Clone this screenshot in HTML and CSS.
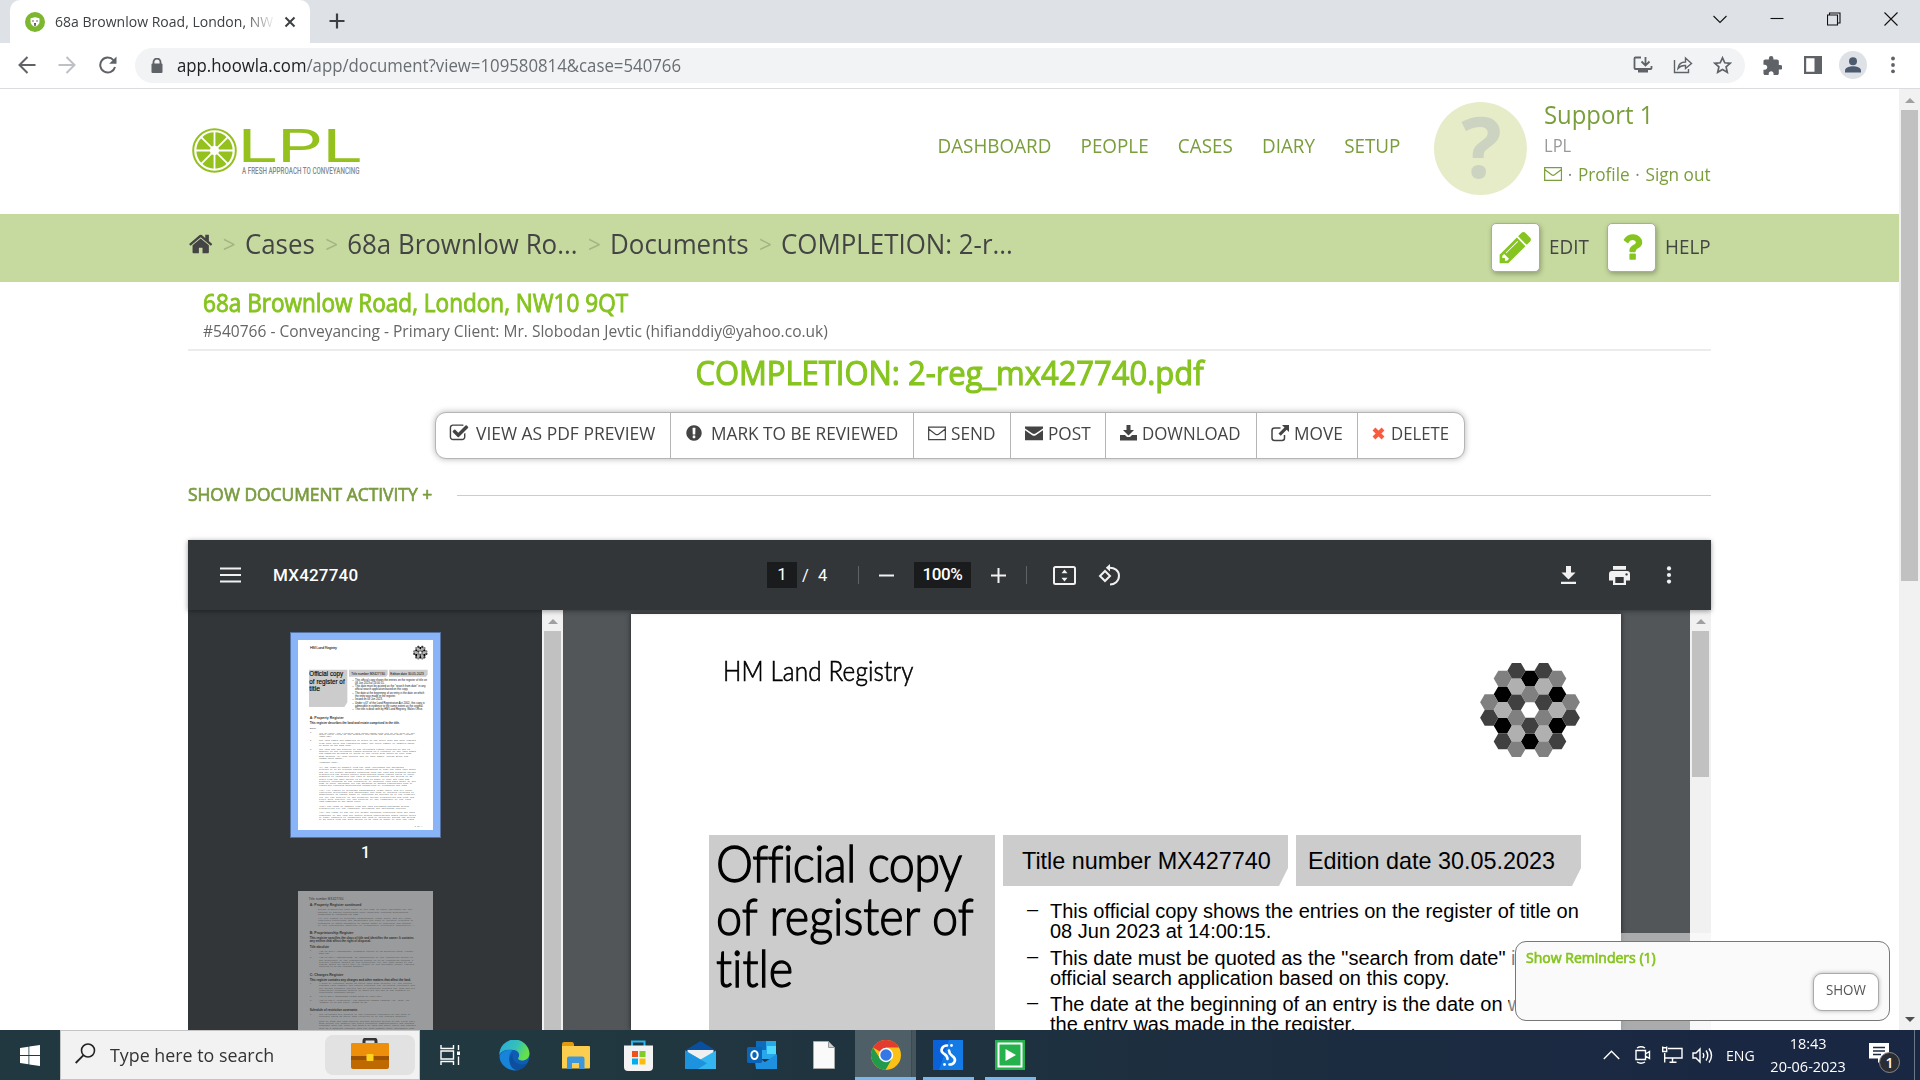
FILE: index.html
```html
<!DOCTYPE html>
<html lang="en">
<head>
<meta charset="utf-8">
<title>68a Brownlow Road, London, NW10 9QT</title>
<link rel="stylesheet" href="styles.css">
</head>
<body>
<div class="tabstrip">
  <div class="tab">
    <svg class="favicon" width="20" height="20" viewBox="0 0 20 20"><circle cx="10" cy="10" r="10" fill="#7db72f"/><path d="M5.500 8q-.5-2.500 1.500-2 3-1.500 6 0 2-.5 1.500 2 .6 3-1.500 5-3 3-6 0-2-2-1.500-5z" fill="#fff"/><circle cx="8" cy="9" r=".8" fill="#555"/><circle cx="12" cy="9" r=".8" fill="#555"/><path d="M9 11h2l-.3 3h-1.400z" fill="#555"/></svg>
    <div class="tab-label"><span class="tab-title">68a Brownlow Road, London, NW</span></div>
    <svg class="tab-close" width="12" height="12" viewBox="0 0 12 12"><path d="M1.500 1.500l9 9M10.500 1.500l-9 9" stroke="#3c4043" stroke-width="2"/></svg>
  </div>
  <svg class="tab-new" width="16" height="16" viewBox="0 0 16 16"><path d="M8 .5v15M.5 8h15" stroke="#3c4043" stroke-width="2.200"/></svg>
  <div class="window-controls">
    <svg width="14" height="14" viewBox="0 0 14 14"><path d="M.5 4l6.500 6.500L13.500 4"/></svg>
    <svg width="14" height="14" viewBox="0 0 14 14"><path d="M.5 6.500h13"/></svg>
    <svg width="14" height="14" viewBox="0 0 14 14"><path d="M.5 3h10v10h-10zM2.500 3V1h10.500v10H10.500"/></svg>
    <svg width="14" height="14" viewBox="0 0 14 14"><path d="M.5.5l13 13M13.500.5l-13 13"/></svg>
  </div>
</div>
<div class="toolbar">
  <div class="nav-icons">
    <svg width="18" height="18" viewBox="0 0 18 18"><path d="M17.500 9H2M9.500 1L1.500 9l8 8" stroke="#5f6368"/></svg>
    <svg width="18" height="18" viewBox="0 0 18 18"><path d="M.5 9H16M8.500 1l8 8-8 8" stroke="#bdc1c6"/></svg>
    <svg width="20" height="18" viewBox="0 0 20 18"><path d="M15.500 4.200A7.500 7.500 0 1 0 17 11" stroke="#5f6368"/><path d="M18.500.5v7.300h-7.300z" fill="#5f6368"/></svg>
  </div>
  <div class="omnibox">
    <svg class="lock" width="12" height="15" viewBox="0 0 12 15"><path d="M2.500 6V4a3.500 3.500 0 0 1 7 0v2" fill="none" stroke="#5f6368" stroke-width="1.800"/><rect x=".5" y="5.500" width="11" height="9.500" rx="1" fill="#5f6368"/></svg>
    <span class="url"><b>app.hoowla.com</b>/app/document?view=109580814&amp;case=540766</span>
    <div class="omni-actions">
      <svg width="20" height="18" viewBox="0 0 20 18"><path d="M8 1.500H2.500q-1 0-1 1V12q0 1 1 1h15q1 0 1-1v-2M12.500 1v8M8.500 5.500l4 4 4-4" fill="none" stroke="#5f6368" stroke-width="1.800"/><path d="M5 13h10v3.500H5z" fill="#5f6368"/></svg>
      <svg width="20" height="18" viewBox="0 0 20 18"><path d="M1.500 4v12.500h14V13M5 12.500c.5-4 3-6.500 7.500-6.500V2l6 5.500-6 5V9.500C9 9.300 7 10 5 12.500z" fill="none" stroke="#5f6368" stroke-width="1.400"/></svg>
      <svg width="19" height="18" viewBox="0 0 19 18"><path d="M9.500 1.800l2.300 5 5.400.5-4.100 3.600 1.200 5.300-4.800-2.800-4.800 2.800 1.200-5.300L1.800 7.300l5.400-.5z" fill="none" stroke="#5f6368" stroke-width="1.700"/></svg>
    </div>
  </div>
  <div class="ext-icons">
    <svg width="19" height="19" viewBox="2 1 20 21"><path fill="#5f6368" d="M20.500 11H19V7c0-1.100-.9-2-2-2h-4V3.500a2.500 2.500 0 0 0-5 0V5H4c-1.100 0-2 .9-2 2v3.800h1.500c1.500 0 2.700 1.200 2.700 2.700S5 16.200 3.500 16.200H2V20c0 1.100.9 2 2 2h3.800v-1.500c0-1.500 1.200-2.700 2.700-2.700s2.700 1.200 2.700 2.700V22H17c1.100 0 2-.9 2-2v-4h1.500a2.500 2.500 0 0 0 0-5z"/></svg>
    <svg width="18" height="18" viewBox="0 0 18 18"><path fill="#5f6368" fill-rule="evenodd" d="M0 0h18v18H0zM2.200 2.200v13.600h8.300V2.200z"/></svg>
    <svg width="28" height="28" viewBox="0 0 28 28"><circle cx="14" cy="14" r="14" fill="#dee1e6"/><circle cx="14" cy="10.200" r="4" fill="#4d5b70"/><path d="M6 21.500v-2c0-3 5-4.300 8-4.300s8 1.300 8 4.300v2z" fill="#4d5b70"/></svg>
    <svg width="6" height="18" viewBox="0 0 6 18"><circle cx="3" cy="2.500" r="1.900" fill="#5f6368"/><circle cx="3" cy="9" r="1.900" fill="#5f6368"/><circle cx="3" cy="15.300" r="1.900" fill="#5f6368"/></svg>
  </div>
</div>

<div class="viewport">
  <div class="page">
    <header class="site-header">
      <svg class="logo" width="172" height="50" viewBox="190 127 172 50">
        <circle cx="214.500" cy="150.500" r="21.300" fill="none" stroke="#95c11f" stroke-width="2"/>
        <circle cx="214.500" cy="150.500" r="11.400" fill="none" stroke="#95c11f" stroke-width="13.500"/>
        <path d="M214.500 131v39M195 150.500h39M200.700 136.700l27.600 27.600M228.300 136.700l-27.600 27.600" stroke="#fff" stroke-width="1.800"/>
        <g class="logo-word" transform="translate(0 161.800) scale(1.600 1)"><text x="148.300 173 201.300">LPL</text></g>
        <text class="logo-tag" x="242" y="174" textLength="117.500" lengthAdjust="spacingAndGlyphs">A FRESH APPROACH TO CONVEYANCING</text>
      </svg>
      <nav class="main-nav"><a>DASHBOARD</a><a>PEOPLE</a><a>CASES</a><a>DIARY</a><a>SETUP</a></nav>
      <div class="avatar">?</div>
      <div class="account">
        <div class="account-name">Support 1</div>
        <div class="account-org">LPL</div>
        <div class="account-links">
          <svg width="19" height="14" viewBox="0 0 19 14"><path d="M.7.700h17.600v12.600H.7zM.7 2.500l7.300 5.300q1.500 1 3 0l7.300-5.300" fill="none" stroke="#7a9e3b" stroke-width="1.300"/></svg>
          <i>·</i><a>Profile</a><i>·</i><a>Sign out</a>
        </div>
      </div>
    </header>

    <div class="crumb-bar">
      <div class="crumbs">
        <svg width="27" height="26" viewBox="0 0 1792 1792" preserveAspectRatio="none"><path fill="#444" d="M1472 992v480q0 26-19 45t-45 19h-384v-384h-256v384h-384q-26 0-45-19t-19-45v-480q0-1 .5-3t.5-3l575-474 575 474q1 2 1 6zm223-69l-62 74q-8 9-21 11h-3q-13 0-21-7l-692-577-692 577q-12 8-24 7-13-2-21-11l-62-74q-8-10-7-23.500t11-21.500l719-599q32-26 76-26t76 26l244 204v-195q0-14 9-23t23-9h192q14 0 23 9t9 23v408l219 182q10 8 11 21.500t-7 23.500z"/></svg>
        <i>&gt;</i><a>Cases</a><i>&gt;</i><a>68a Brownlow Ro...</a><i>&gt;</i><a>Documents</a><i>&gt;</i><a>COMPLETION: 2-r...</a>
      </div>
      <div class="crumb-actions">
        <span class="square-btn"><svg width="37" height="37" viewBox="0 0 1792 1792"><path fill="#86c41f" d="M491 1536l91-91-235-235-91 91v107h128v128h107zm523-928q0-22-22-22-10 0-17 7l-542 542q-7 7-7 17 0 22 22 22 10 0 17-7l542-542q7-7 7-17zm-54-192l416 416-832 832h-416v-416zm683 96q0 53-37 90l-166 166-416-416 166-165q36-38 90-38 53 0 91 38l235 234q37 39 37 91z"/></svg></span>
        <span class="action-label edit-label">EDIT</span>
        <span class="square-btn"><svg width="36" height="36" viewBox="0 0 1792 1792"><path fill="#86c41f" d="M1088 1256v240q0 16-12 28t-28 12h-240q-16 0-28-12t-12-28v-240q0-16 12-28t28-12h240q16 0 28 12t12 28zm316-600q0 54-15.500 101t-35 76.500-55 59.500-57.500 43.500-61 35.500q-41 23-68.500 65t-27.500 67q0 17-12 32.500t-28 15.500h-240q-15 0-25.500-18.500t-10.500-37.500v-45q0-83 65-156.500t143-108.500q59-27 84-56t25-76q0-42-46.500-74t-107.500-32q-65 0-108 29-35 25-107 115-13 16-31 16-12 0-25-8l-164-125q-13-10-15.500-25t5.500-28q160-266 464-266 80 0 161 31t146 83 106 127.500 41 158.500z"/></svg></span>
        <span class="action-label help-label">HELP</span>
      </div>
    </div>

    <section class="case-info">
      <h2>68a Brownlow Road, London, NW10 9QT</h2>
      <p>#540766 - Conveyancing - Primary Client: Mr. Slobodan Jevtic (hifianddiy@yahoo.co.uk)</p>
    </section>
    <h1>COMPLETION: 2-reg_mx427740.pdf</h1>

    <div class="doc-actions">
      <a class="act-preview"><svg width="20" height="20" viewBox="0 0 1792 1792"><path fill="#444" d="M1472 930v318q0 119-84.500 203.500t-203.500 84.500h-832q-119 0-203.500-84.500t-84.500-203.500v-832q0-119 84.500-203.500t203.500-84.500h832q63 0 117 25 15 7 18 23 3 17-9 29l-49 49q-10 10-23 10-3 0-9-2-23-6-45-6h-832q-66 0-113 47t-47 113v832q0 66 47 113t113 47h832q66 0 113-47t47-113v-254q0-13 9-22l64-64q10-10 23-10 6 0 12 3 20 8 20 29zm231-489l-814 814q-24 24-57 24t-57-24l-430-430q-24-24-24-57t24-57l110-110q24-24 57-24t57 24l263 263 647-647q24-24 57-24t57 24l110 110q24 24 24 57t-24 57z"/></svg><span>VIEW AS PDF PREVIEW</span></a>
      <a class="act-review"><svg width="18" height="18" viewBox="0 0 1792 1792"><path fill="#444" d="M896 128q209 0 385.500 103t279.500 279.500 103 385.500-103 385.500-279.500 279.500-385.500 103-385.500-103-279.500-279.500-103-385.500 103-385.500 279.500-279.500 385.500-103zm128 1247v-190q0-14-9-23.500t-22-9.500h-192q-13 0-23 10t-10 23v190q0 13 10 23t23 10h192q13 0 22-9.500t9-23.500zm-2-344l18-621q0-12-10-18-10-8-24-8h-220q-14 0-24 8-10 6-10 18l17 621q0 10 10 17.500t24 7.500h185q14 0 23.500-7.500t10.500-17.500z"/></svg><span>MARK TO BE REVIEWED</span></a>
      <a class="act-send"><svg width="18" height="15" viewBox="0 0 19 15"><path d="M.7.700h17.600v13.300H.7zM.7 2.800l7.200 5.400q1.600 1.100 3.200 0l7.200-5.400" fill="none" stroke="#444" stroke-width="1.300"/></svg><span>SEND</span></a>
      <a class="act-post"><svg width="18" height="15" viewBox="0 0 19 15"><path d="M0 0h19v2.200l-7.900 5.400q-1.600 1-3.200 0L0 2.200zM0 4.200l8 5.300q1.500 1 3 0l8-5.300V14.500H0z" fill="#444"/></svg><span>POST</span></a>
      <a class="act-download"><svg width="17" height="16" viewBox="0 0 17 16"><path d="M6.500 0h4v5h3.500L8.500 10.500 3 5h3.500zM0 10h5l2 2h3l2-2h5v5.500H0z" fill="#444"/></svg><span>DOWNLOAD</span></a>
      <a class="act-move"><svg width="18" height="17" viewBox="0 0 18 17"><path d="M9.500 3H3.500q-2.500 0-2.500 2.500v7.500q0 2.500 2.500 2.500h7.500q2.500 0 2.500-2.500v-3" fill="none" stroke="#444" stroke-width="1.500"/><path d="M11 0h7v7l-2.300-2.300-6 6L7.500 8.500l6-6z" fill="#444"/></svg><span>MOVE</span></a>
      <a class="act-delete"><svg width="13" height="13" viewBox="0 0 13 13"><path d="M2 2l9 9M11 2l-9 9" stroke="#fb5a3c" stroke-width="4"/></svg><span>DELETE</span></a>
    </div>

    <div class="activity"><a>SHOW DOCUMENT ACTIVITY +</a><hr></div>

    <div class="viewer">
      <div class="viewer-bar">
        <svg width="21" height="16" viewBox="0 0 21 16"><path d="M0 1.500h21M0 8h21M0 14.500h21" stroke="#f1f1f1" stroke-width="2.200"/></svg>
        <b class="viewer-title">MX427740</b>
        <div class="viewer-tools">
          <span class="page-no">1</span><span class="page-total">/&nbsp; 4</span>
          <i></i>
          <svg width="15" height="15" viewBox="0 0 15 15"><path d="M0 7.500h15" stroke="#f1f1f1" stroke-width="2"/></svg>
          <span class="zoom-level">100%</span>
          <svg width="15" height="15" viewBox="0 0 15 15"><path d="M0 7.500h15M7.500 0v15" stroke="#f1f1f1" stroke-width="2"/></svg>
          <i></i>
          <svg class="fit" width="23" height="19" viewBox="0 0 23 19"><rect x="1" y="1" width="21" height="17" rx="1.500" fill="none" stroke="#f1f1f1" stroke-width="2"/><path d="M11.500 3.500l3 3.700h-6zM11.500 15.500l3-3.700h-6z" fill="#f1f1f1"/></svg>
          <svg class="rotate" width="23" height="22" viewBox="0 0 23 22"><path d="M7 7l5 5-5 5-5-5zM10.500 3.800c6-.5 10.500 2.700 10.500 8s-4.500 8.700-9 8.700" fill="none" stroke="#f1f1f1" stroke-width="2"/><path d="M12 0v7.600L7.800 3.800z" fill="#f1f1f1"/></svg>
        </div>
        <div class="viewer-end">
          <svg width="15" height="18" viewBox="0 0 15 18"><path d="M5 0h5v6.500h4.500l-7 7-7-7H5zM0 15.700h15V18H0z" fill="#f1f1f1"/></svg>
          <svg width="21" height="19" viewBox="0 0 21 19"><path fill-rule="evenodd" d="M4 0h13v3.800H4zM3 5h15q3 0 3 3v6.500h-4V19H4v-4.500H0V8q0-3 3-3zm3.300 6v6h8.400v-6zM17.500 7.200a1.200 1.200 0 1 0 .1 0z" fill="#f1f1f1"/></svg>
          <svg class="more" width="6" height="18" viewBox="0 0 6 18"><circle cx="3" cy="2.400" r="2.100" fill="#f1f1f1"/><circle cx="3" cy="9" r="2.100" fill="#f1f1f1"/><circle cx="3" cy="15.600" r="2.100" fill="#f1f1f1"/></svg>
        </div>
      </div>
      <div class="viewer-body">
        <aside class="thumbs">
          <div class="thumb thumb-current">
            <svg width="135" height="190" viewBox="0 0 405 570">
              <rect width="405" height="570" fill="#fff"/>
              <text x="36" y="27" font-size="11.500" textLength="81">HM Land Registry</text>
              <use href="#hmlr" x="0" y="0" transform="translate(367 38) scale(.44)"/>
              <path d="M33 89h115v98l-9 14H33zM153 89h116v15l-5 6H153zM273 89h116v15l-5 6H273z" fill="#ccc"/>
              <g font-size="22" stroke="#000" stroke-width=".4"><text x="34" y="109" textLength="101" lengthAdjust="spacingAndGlyphs">Official copy</text><text x="34" y="131" textLength="106" lengthAdjust="spacingAndGlyphs">of register of</text><text x="34" y="153" textLength="32" lengthAdjust="spacingAndGlyphs">title</text></g>
              <g font-size="9.500"><text x="160" y="104">Title number MX427740</text><text x="277" y="104">Edition date 30.05.2023</text></g>
              <g font-size="8" fill="#111"><text x="163" y="123">–</text><text x="171" y="123" textLength="216">This official copy shows the entries on the register of title on</text><text x="171" y="131">08 Jun 2023 at 14:00:15.</text><text x="163" y="142">–</text><text x="171" y="142" textLength="212">This date must be quoted as the "search from date" in any</text><text x="171" y="151">official search application based on this copy.</text><text x="163" y="161">–</text><text x="171" y="161" textLength="208">The date at the beginning of an entry is the date on which</text><text x="171" y="170">the entry was made in the register.</text><text x="163" y="179">–</text><text x="171" y="179">Issued on 08 Jun 2023.</text><text x="163" y="191">–</text><text x="171" y="191" textLength="209">Under s.67 of the Land Registration Act 2002, this copy is</text><text x="171" y="200" textLength="205">admissible in evidence to the same extent as the original.</text><text x="163" y="209">–</text><text x="171" y="209" textLength="204">This title is dealt with by HM Land Registry, Wales Office.</text></g>
              <text x="35" y="238" font-size="10.500" font-weight="700" fill="#333">A: Property Register</text>
              <text x="35" y="253" font-size="9" font-weight="700" fill="#333" textLength="270">This register describes the land and estate comprised in the title.</text>
              <g class="mono"><text x="35" y="268">BRENT</text><text x="36" y="280">1</text><text x="63" y="281" textLength="287">(19.09.1961) The Freehold land shown edged with red on the plan of the</text><text x="63" y="286" textLength="281">above title filed at the Registry and being 68a Brownlow Road, London</text><text x="63" y="292">(NW10 9QT).</text><text x="36" y="304">2</text><text x="63" y="304" textLength="290">The land edged and numbered in green on the title plan has been removed</text><text x="63" y="312" textLength="286">from this title and registered under the title number or numbers shown</text><text x="63" y="319">in green on the said plan.</text><text x="36" y="331">3</text><text x="63" y="331" textLength="273">The land has the benefit of the following rights reserved by but is</text><text x="63" y="337" textLength="290">subject to the following rights granted by a Transfer of the land edged</text><text x="63" y="343" textLength="277">and numbered MX435678 in green on the filed plan dated 12 July 1983</text><text x="63" y="352" textLength="267">made between (1) John Patrick and (2) Mary Smith, George Brent and</text><text x="63" y="358">Thomas Henry Smith:-</text><text x="63" y="370">"Together with:-</text><text x="63" y="385" textLength="254">(i) The right of support from the land (including the buildings</text><text x="63" y="391" textLength="290">erected or to be erected thereon) adjoining or near the said land shown</text><text x="63" y="400" textLength="290">and for all proper purposes connected with the land and property hereby</text><text x="63" y="406" textLength="286">transferred the drains sewers watercourses pipes cables wires or other</text><text x="63" y="412" textLength="280">channels or conductors now laid or hereafter during the period of 80</text><text x="63" y="419" textLength="270">years from the date hereof to be laid in under or over the land and</text><text x="63" y="427" textLength="290">property retained by the Transferor or adjacent land with power at any</text><text x="63" y="433" textLength="280">time to enter thereupon for the purposes of making connections with or</text><text x="63" y="439" textLength="264">repairing renewing maintaining inspecting or cleansing the same</text><text x="63" y="454" textLength="280">(ii) All rights of drainage passageways light water and all other</text><text x="63" y="460" textLength="285">liberties privileges and advantages now used or enjoyed relating or</text><text x="63" y="466" textLength="287">appurtenant in equity quasi or otherwise by Section 62 of the Property</text><text x="63" y="473" textLength="285">Act for the benefit of the property hereby transferred and each and</text><text x="63" y="479" textLength="275">every part thereof for the benefit of the remainder of the land</text><text x="63" y="486">land comprised in the above title</text><text x="63" y="501" textLength="270">(iii) The right of support from the land including buildings hereby</text><text x="63" y="507" textLength="260">transferred for the remainder including the buildings thereon</text><text x="63" y="519" textLength="287">(iv) The right to use for all proper purposes connected with the said</text><text x="63" y="528" textLength="290">remainder of the land the sewers drains watercourses pipes cables wires</text><text x="63" y="534" textLength="288">or other channels or conductors now laid or hereafter during the period</text><text x="63" y="540" textLength="284">of 80 years from the date hereof to be laid in under or over the land</text><text x="350" y="561">1 of 4</text></g>
            </svg>
          </div>
          <span class="thumb-no">1</span>
          <div class="thumb">
            <svg width="135" height="190" viewBox="0 0 405 570">
              <rect width="405" height="570" fill="#9a9b9d"/>
              <g fill="#333">
                <text x="32" y="27" font-size="9" textLength="104">Title number MX427740</text>
                <g font-size="10.500" font-weight="700"><text x="35" y="45">A: Property Register continued</text><text x="35" y="129">B: Proprietorship Register</text><text x="35" y="254">C: Charges Register</text></g>
                <g font-size="9" font-weight="700"><text x="35" y="144" textLength="312" lengthAdjust="spacingAndGlyphs">This register specifies the class of title and identifies the owner. It contains</text><text x="35" y="152">any entries that affect the right of disposal.</text><text x="35" y="170">Title absolute</text><text x="35" y="269" textLength="304">This register contains any charges and other matters that affect the land.</text><text x="35" y="361">Schedule of restrictive covenants</text></g>
              </g>
              <g class="mono mono-dim"><text x="60" y="57" textLength="282">hereby transferred with power at any time to enter thereupon for the</text><text x="60" y="66" textLength="270">purpose of making connections with repairing renewing maintaining</text><text x="60" y="73">inspecting or cleansing the same</text><text x="60" y="84" textLength="280">(v) All rights of drainage passageways light water and all other</text><text x="60" y="91" textLength="286">liberties privileges and advantages now used or enjoyed relating or</text><text x="60" y="98" textLength="280">easements or quasi-easements in equity quasi or otherwise and whether</text><text x="60" y="104" textLength="288">or not continuous apparent or reasonably necessary whatsoever."</text><text x="36" y="181">1</text><text x="63" y="182" textLength="282">(08.10.2004) PROPRIETOR: SLOBODAN JEVTIC of 68 Brownlow Road, London</text><text x="63" y="188">NW10 9QT.</text><text x="36" y="200">2</text><text x="63" y="200" textLength="282">(08.10.2004) RESTRICTION: No disposition of the registered estate by</text><text x="63" y="209" textLength="282">the proprietor of the registered estate is to be registered without a</text><text x="63" y="215" textLength="280">written consent signed by the proprietor for the time being of the</text><text x="63" y="222" textLength="285">Charge dated 20 April 2004 in favour of The Mortgage Lender Limited</text><text x="63" y="228">referred to in the Charges Register.</text><text x="36" y="280">1</text><text x="63" y="280" textLength="278">A Deed of Covenant dated 25 March 1893 made between (1) The United</text><text x="63" y="286" textLength="287">Kingdom Land Company and others contains the following covenants and</text><text x="63" y="293" textLength="288">the Second Schedule thereto but no conditions binding the land and all</text><text x="63" y="300" textLength="272">restrictive covenants details of which are set out in the schedule of</text><text x="63" y="306">restrictive covenants hereto.</text><text x="36" y="319">2</text><text x="63" y="319">(08.10.2004) REGISTERED CHARGE dated 20 April 2004.</text><text x="36" y="331">3</text><text x="63" y="331" textLength="274">(08.10.2004) Proprietor: THE MORTGAGE LENDER LIMITED (Co. Regn. No.</text><text x="63" y="337">4239876) of 10 Old Jewry, London EC 2R.</text><text x="36" y="373">1</text><text x="63" y="373" textLength="274">The following are details of the covenants contained in the Deed of</text><text x="63" y="379" textLength="270">Covenant dated 25 March 1893 referred to in the Charges Register:-</text><text x="63" y="394" textLength="287">Each of them the said several persons parties hereto of the first part</text><text x="63" y="400" textLength="285">doth hereby for himself his heirs executors administrators and assigns</text><text x="63" y="406" textLength="290">covenant with the other and others of them and their heirs and assigns</text><text x="63" y="413" textLength="286">only as a separate covenant with the said Company their successors that</text></g>
            </svg>
          </div>
        </aside>
        <div class="scrollbar side-scroll"><b></b><span></span></div>
        <div class="pdf-main">
          <div class="pdf-page">
            <div class="pdf-head">
              <span class="hmlr-name">HM Land Registry</span>
              <svg width="102" height="96" viewBox="-51 -48 102 96">
                <defs>
                  <path id="hx" d="M-9.100 0l4.600-7.900h9l4.600 7.900-4.600 7.900h-9z"/>
                  <g id="hmlr">
                    <g fill="#000"><use href="#hx" y="-31.400"/><use href="#hx" y="31.400"/><use href="#hx" x="-27.200" y="-15.700"/><use href="#hx" x="27.200" y="-15.700"/><use href="#hx" x="-27.200" y="15.700"/><use href="#hx" x="27.200" y="15.700"/></g>
                    <g fill="#404040"><use href="#hx" y="15.700"/><use href="#hx" x="-13.600" y="-39.200"/><use href="#hx" x="13.600" y="-39.200"/><use href="#hx" x="-13.600" y="-7.850"/><use href="#hx" x="13.600" y="-7.850"/><use href="#hx" x="-27.200" y="31.400"/><use href="#hx" x="27.200" y="31.400"/><use href="#hx" x="-40.800" y="7.850"/><use href="#hx" x="40.800" y="7.850"/></g>
                    <g fill="#808080"><use href="#hx" y="-15.700"/><use href="#hx" x="-13.600" y="7.850"/><use href="#hx" x="13.600" y="7.850"/><use href="#hx" x="-13.600" y="39.200"/><use href="#hx" x="13.600" y="39.200"/><use href="#hx" x="-27.200" y="-31.400"/><use href="#hx" x="27.200" y="-31.400"/><use href="#hx" x="-40.800" y="-7.850"/><use href="#hx" x="40.800" y="-7.850"/></g>
                    <g fill="#b0b0b0"><use href="#hx" x="-13.600" y="-23.500"/><use href="#hx" x="13.600" y="-23.500"/><use href="#hx" x="-13.600" y="23.500"/><use href="#hx" x="13.600" y="23.500"/><use href="#hx" x="-27.200"/><use href="#hx" x="27.200"/></g>
                  </g>
                </defs>
                <use href="#hmlr"/>
              </svg>
            </div>
            <div class="pdf-grid">
              <div class="official"><div class="o1">Official copy</div><div>of register of</div><div>title</div></div>
              <div class="tag tag-title">Title number MX427740</div>
              <div class="tag tag-edition">Edition date 30.05.2023</div>
              <ul class="notes">
                <li>This official copy shows the entries on the register of title on<br>08 Jun 2023 at 14:00:15.</li>
                <li>This date must be quoted as the "search from date" in any<br>official search application based on this copy.</li>
                <li>The date at the beginning of an entry is the date on which<br>the entry was made in the register.</li>
              </ul>
            </div>
          </div>
        </div>
        <div class="scrollbar main-scroll"><b></b><span></span></div>
      </div>
    </div>
    <div class="reminder-wrap">
      <div class="reminder"><strong>Show Reminders (1)</strong><button><span>SHOW</span></button></div>
    </div>
  </div>
  <div class="scrollbar page-scroll"><b></b><span></span><em></em></div>
</div>

<div class="taskbar">
  <div class="start"><svg width="20" height="21" viewBox="0 0 20 21"><path d="M0 3l8.500-1.300V10H0zM9.300 1.500L20 0v10H9.300zM0 11h8.500v8.200L0 18zM9.300 11H20v10L9.300 19.500z" fill="#fff"/></svg></div>
  <div class="search">
    <svg width="21" height="21" viewBox="0 0 21 21"><circle cx="13" cy="7.500" r="6.500" fill="none" stroke="#222" stroke-width="1.600"/><path d="M8.300 12.300L.7 20" stroke="#222" stroke-width="1.800"/></svg>
    <span>Type here to search</span>
    <div class="briefcase"><svg width="40" height="32" viewBox="0 0 40 32"><path d="M14 7V3q0-2 2-2h8q2 0 2 2v4" fill="none" stroke="#333" stroke-width="3"/><rect x="1" y="5" width="38" height="26" rx="2" fill="#bf6a00"/><path d="M1 19V7q0-2 2-2h34q2 0 2 2v12z" fill="#ee8f0c"/><path d="M1 18h38v4H1z" fill="#9c5200"/><rect x="16.500" y="16" width="7" height="7" rx="1" fill="#ffd31a"/></svg></div>
  </div>
  <div class="apps">
    <span class="task-view"><svg width="21" height="20" viewBox="0 0 21 20"><path d="M1 0v3.500h12.500V0M1 20v-3.500h12.500V20M1 6h12.500v8H1zM18.500 0v5M18.500 11.500V20" fill="none" stroke="#fff" stroke-width="1.400"/><path d="M17 6.500h3v3.500h-3z" fill="#fff"/></svg></span>
    <span><svg width="31" height="31" viewBox="0 0 31 31"><defs><linearGradient id="eg" x1="0" y1="0" x2="1" y2=".4"><stop offset="0" stop-color="#2aa8e0"/><stop offset=".6" stop-color="#35c1b8"/><stop offset="1" stop-color="#66e04a"/></linearGradient></defs><circle cx="15.500" cy="15.500" r="15" fill="#0f5cb5"/><path d="M.5 15.500A15 15 0 0 1 30.500 13.500c0 4.500-3.500 7-7.500 7-3.500 0-4.500-1.500-3.500-3 2-4-1-7.500-5-7.500C7 9 1.500 11 .5 15.500z" fill="url(#eg)"/><path d="M11 14c-3 6 1 15 9 16-11 2-19-6-19.400-13C2 11 8 9 13.500 10.500c-1 .8-2 2-2.500 3.500z" fill="#1784d9"/><path d="M14 13c-2 6 2 11 8 11.500 3 0 5-.7 6.500-1.500-3 5-8 7.500-12 7-6-2-8-11-2.500-17z" fill="#0d4f9c"/></svg></span>
    <span><svg width="28" height="28" viewBox="0 0 28 28"><path d="M0 3q0-2 2-2h8q1.500 0 2 2v5H0z" fill="#e29a0e"/><path d="M0 5h27q1 0 1 1v20.500q0 1-1 1H0z" fill="#fbce4f"/><path d="M5 28V17.500q0-2 2-2h13.500q2 0 2 2V28h-5.500v-6h-7v6z" fill="#3e97dc"/></svg></span>
    <span><svg width="31" height="31" viewBox="0 0 31 31"><path d="M9 7V1.500h12.500V7" fill="none" stroke="#29b6f0" stroke-width="2"/><path d="M1 5.500h29V27q0 4-4 4H5q-4 0-4-4z" fill="#f3f3f3"/><path d="M9 11h6v6H9z" fill="#f1511b"/><path d="M16.500 11h6v6h-6z" fill="#80cc28"/><path d="M9 18.500h6v6H9z" fill="#00adef"/><path d="M16.500 18.500h6v6h-6z" fill="#fbbc09"/></svg></span>
    <span><svg width="31" height="28" viewBox="0 0 31 28"><path d="M0 9.500L15.500 0 31 9.500z" fill="#0a4f9e"/><path d="M2.500 9h26v15h-26z" fill="#f0f0f0"/><path d="M0 9.500l15.500 9L31 9.500V28H0z" fill="#35b5ef"/><path d="M0 9.500l22 12.800L13 28H0z" fill="#1d93dd"/></svg></span>
    <span><svg width="30" height="28" viewBox="0 0 30 28"><path d="M9 0h20v18H9z" fill="#28a8ea"/><path d="M9 0h10v9H9z" fill="#0f6cbd"/><path d="M20 5h9v8h-9z" fill="#50d9ff"/><path d="M7 14l11 7 12-8v15H9z" fill="#1f8fe0"/><rect y="6" width="15" height="16" rx="1.500" fill="#0a64b8"/><ellipse cx="7.500" cy="14" rx="3.200" ry="3.900" fill="none" stroke="#fff" stroke-width="2"/></svg></span>
    <span><svg width="22" height="28" viewBox="0 0 22 28"><path d="M.5.5h15l6 6v21H.5z" fill="#fafafa" stroke="#aaa"/><path d="M15.500.5v6h6z" fill="#d0d0d0" stroke="#999"/></svg></span>
    <span class="app-open app-active"><svg width="30" height="30" viewBox="0 0 30 30"><circle cx="15" cy="15" r="15" fill="#fbc116"/><path d="M15 15L2 7.500A15 15 0 0 1 28 7.500H15z" fill="#e33b2e"/><path d="M2 7.500A15 15 0 0 0 14.500 30L21 18.500H9z" fill="#229a4b"/><circle cx="15" cy="15" r="7.200" fill="#fff"/><circle cx="15" cy="15" r="5.700" fill="#3577e5"/></svg></span>
    <span class="app-open"><svg width="30" height="30" viewBox="0 0 30 30"><path d="M0 0h30v30H0z" fill="#0b62d6"/><path d="M16 0h14v30H6z" fill="#1b8cf0" opacity=".6"/><path d="M14 5.500c-5 0-7 5-4 7.500 2 1.800 4.500 2.500 4.500 6M16 10.500c0 3.500 2.500 4.500 4.500 6.500 3 3 1 7.500-4 7.500" fill="none" stroke="#fff" stroke-width="2.600" stroke-linecap="round"/><circle cx="18.500" cy="5.500" r="1.400" fill="#fff"/><circle cx="11.500" cy="24.500" r="1.400" fill="#fff"/></svg></span>
    <span class="app-open"><svg width="30" height="30" viewBox="0 0 30 30"><path d="M0 0h30v30H0z" fill="#25b14c"/><path d="M3.500 3.500h23v23h-23z" fill="none" stroke="#fff" stroke-width="2"/><path d="M10.500 9l10.500 6-10.500 6z" fill="#fff"/></svg></span>
  </div>
  <div class="tray">
    <svg width="17" height="10" viewBox="0 0 17 10"><path d="M.8 9l7.700-7.700L16.200 9"/></svg>
    <svg class="cam" width="16" height="18" viewBox="0 0 16 18"><path d="M1 4.500h9.500v9H1zM10.500 8l4-2.500v7l-4-2.500M2 2q4-2.500 8 0M2 16q4 2.500 8 0"/></svg>
    <svg class="net" width="21" height="18" viewBox="0 0 21 18"><path d="M6 2.500h14v9.500H3M10.500 12v4M7.500 16.300h7M2.700 7v9.500M.7 1.700h4v3.800h-4zM.7 1.700v-1.200M4.700 1.700v-1.200"/></svg>
    <svg class="vol" width="22" height="17" viewBox="0 0 22 17"><path d="M1 6h3l4-4v13L4 11H1zM11 6q1.500 2.500 0 5M14 3.500q3.500 5 0 10M17 1.500q5 7 0 14"/></svg>
    <span class="lang">ENG</span>
    <div class="clock"><span>18:43</span><span>20-06-2023</span></div>
    <div class="notify"><svg width="20" height="20" viewBox="0 0 20 20"><path d="M0 0h20v15.500h-6L9 20v-4.500H0z" fill="#fff"/><path d="M4 4.500h12M4 8h12M4 11.500h8" stroke="#1b2a41" stroke-width="1.200"/></svg><b>1</b></div>
    <div class="peek"></div>
  </div>
</div>
</body>
</html>
```
FILE: styles.css
```css
* { box-sizing: border-box; }
body { margin: 0; width: 1920px; height: 1080px; overflow: hidden; display: flex; flex-direction: column; font-family: "Open Sans", "Noto Sans", sans-serif; color: #444; background: #fff; }
svg { display: block; flex: none; }
h1, h2, p, ul { margin: 0; padding: 0; font-weight: 400; }
i, em { font-style: normal; }

/* Browser chrome */
.tabstrip { height: 43px; flex: none; background: #dee1e6; display: flex; align-items: flex-start; padding-left: 10px; }
.tab { width: 300px; height: 43px; background: #fff; border-radius: 10px 10px 0 0; display: flex; align-items: center; padding-left: 15px; }
.tab-label { margin-left: 10px; width: 219px; }
.tab-title { display: block; width: 240px; font-size: 15px; line-height: 20px; white-space: nowrap; color: #3c4043; transform: scaleX(.935); transform-origin: 0 0; margin-bottom: 2px; -webkit-mask-image: linear-gradient(90deg, #000 203px, transparent 236px); mask-image: linear-gradient(90deg, #000 203px, transparent 236px); }
.tab-close { margin-left: 10px; }
.tab-new { margin: 13px 0 0 19px; }
.window-controls { margin: 12px 22px 0 auto; display: flex; gap: 43px; }
.window-controls path { fill: none; stroke: #111; stroke-width: 1.1; }
.toolbar { height: 46px; flex: none; border-bottom: 1px solid #dadce0; display: flex; align-items: center; padding: 0 0 1px 18px; }
.nav-icons { display: flex; gap: 22px; width: 117px; }
.nav-icons path { fill: none; stroke-width: 2; }
.nav-icons path[fill] { fill: #5f6368; }
.omnibox { width: 1610px; height: 35px; border-radius: 18px; background: #f1f3f4; display: flex; align-items: center; padding: 0 13px 0 16px; }
.url { margin-left: 14px; font-size: 18px; color: #6a6e73; line-height: 28px; transform: scaleX(.9325); transform-origin: 0 0; white-space: nowrap; }
.url b { font-weight: 400; color: #202124; }
.omni-actions { margin-left: auto; display: flex; gap: 20px; }
.ext-icons { display: flex; align-items: center; margin-left: 18px; }
.ext-icons svg:nth-child(2) { margin-left: 22px; }
.ext-icons svg:nth-child(3) { margin-left: 17px; }
.ext-icons svg:nth-child(4) { margin-left: 23px; }

/* Page */
.viewport { height: 941px; flex: none; display: flex; overflow: hidden; }
.page { width: 1899px; position: relative; overflow: hidden; }
.scrollbar { background: #f1f1f1; flex: none; width: 21px; padding: 0 2px; display: flex; flex-direction: column; align-items: center; }
.scrollbar b { height: 21px; flex: none; display: flex; align-items: center; }
.scrollbar b::before { content: ""; border: 5px solid transparent; border-bottom-color: #a0a0a0; border-top: 0; margin-top: 2px; }
.scrollbar span { width: 17px; background: #c1c1c1; }
.scrollbar em { margin: auto 0 8px; border: 5px solid transparent; border-top-color: #505050; border-bottom: 0; }
.page-scroll span { height: 471px; }

.site-header { height: 125px; padding: 0 188px 0 190px; display: flex; }
.logo { margin-top: 38px; }
.logo-word { font: 400 45.5px Inter, sans-serif; fill: #95c11f; }
.logo-tag { font: 500 8.300px Roboto, sans-serif; fill: #888; }
.main-nav { margin: 44px 1px 0 auto; display: flex; gap: 31px; font-size: 20px; line-height: 26px; color: #7a9e3b; transform: scaleX(.942); transform-origin: 100% 0; }
.avatar { margin: 13px 17px 0 33px; width: 93px; height: 93px; flex: none; border-radius: 50%; background: #e6ecc8; color: #ccd3c0; font: 700 85px/86px "Open Sans", sans-serif; text-align: center; padding-left: 2px; }
.account { width: 167px; padding-top: 9px; color: #7a9e3b; font-size: 18px; }
.account > div { transform-origin: 0 0; white-space: nowrap; }
.account-name { font-size: 25px; line-height: 33px; transform: scaleX(.955); }
.account-org { color: #999; line-height: 28px; transform: scaleX(.92); }
.account-links { display: flex; align-items: center; width: 175px; line-height: 30px; transform: scaleX(.955); }
.account-links i { width: 16.500px; text-align: center; color: #888; }

.crumb-bar { height: 68px; background: #c6da9f; padding: 0 188px; display: flex; justify-content: space-between; }
.crumbs { display: flex; align-items: center; gap: 11px; font-size: 27.500px; line-height: 40px; height: 60px; color: #444; white-space: nowrap; transform: scaleX(.941); transform-origin: 0 0; }
.crumbs svg { margin-right: -1px; }
.crumbs i { color: #a3b585; font-size: 24px; width: 12.500px; }
.crumb-actions { display: flex; align-items: center; height: 66px; font-size: 20.500px; line-height: 26px; flex: none; margin-left: auto; }
.square-btn { width: 49px; height: 49px; background: #fff; border: 1px solid #aaa; border-radius: 5px; box-shadow: 1px 2px 5px rgba(0,0,0,.28); display: flex; align-items: center; justify-content: center; margin-top: 0; }
.action-label { transform: scaleX(.92); transform-origin: 0 0; margin-left: 9px; margin-top: -2px; }
.edit-label { width: 40px; margin-right: 18px; }
.help-label { width: 46px; }

.case-info { margin: 0 188px; height: 69px; border-bottom: 2px solid #ececec; padding: 4px 15px 0; white-space: nowrap; }
.case-info h2 { font-size: 24.700px; line-height: 34px; color: #86c41f; -webkit-text-stroke: .9px #86c41f; transform: scaleX(.913); transform-origin: 0 0; }
.case-info p { font-size: 17px; line-height: 22px; color: #666; transform: scaleX(.9145); transform-origin: 0 0; }
h1 { height: 62px; font-size: 33px; line-height: 43px; text-align: center; color: #86c41f; -webkit-text-stroke: 1.100px #86c41f; transform: scaleX(.938); }

.doc-actions { width: 1030px; height: 47px; margin: -1px auto 0; display: flex; border: 1px solid #b5b5b5; border-radius: 11px; box-shadow: 0 0 6px rgba(0,0,0,.3); font-size: 18.300px; line-height: 24px; white-space: nowrap; background: #fff; }
.doc-actions a { display: flex; align-items: center; gap: 5px; padding: 0 0 5px 14px; border-left: 1px solid #b5b5b5; }
.doc-actions span { transform: scaleX(.942); transform-origin: 0 0; }
.doc-actions .act-preview { width: 234px; padding-left: 13px; gap: 7.500px; border: 0; }
.act-preview span { transform: scaleX(.954); }
.act-review { width: 243px; }
.doc-actions .act-review { gap: 8px; padding-left: 14px; }
.act-send { width: 97px; }
.act-post { width: 95px; }
.act-download { width: 151px; }
.doc-actions .act-download span { transform: scaleX(.923); }
.act-move { width: 101px; }
.act-delete { width: 107px; }
.doc-actions .act-delete { gap: 6px; padding-left: 14px; }
.doc-actions .act-delete span { transform: scaleX(.915); }

.activity { margin: 18px 188px 0; height: 34px; display: flex; align-items: center; gap: 25px; }
.activity a { width: 244px; font-size: 18px; line-height: 24px; color: #7a9c3f; -webkit-text-stroke: .7px #7a9c3f; white-space: nowrap; transform: scaleX(.966); transform-origin: 0 0; }
.activity hr { flex: 1; border: 0; border-top: 1px solid #ccc; margin: 2px 0 0; }

/* PDF viewer */
.viewer { margin: 29px 188px 0; }
.viewer-bar { height: 70px; background: #323639; position: relative; display: flex; align-items: center; padding: 0 39px 0 32px; box-shadow: 0 1px 5px rgba(0,0,0,.4); color: #fff; font-family: Roboto, sans-serif; font-size: 17px; }
.viewer-title { margin-left: 32px; width: 494px; font-weight: 500; letter-spacing: .2px; font-size: 17px; }
.viewer-tools { display: flex; align-items: center; }
.page-no { width: 30px; height: 26px; line-height: 25px; background: #191b1c; text-align: center; }
.page-total { width: 61px; padding-left: 5px; font-size: 16.500px; letter-spacing: .3px; }
.viewer-tools i { width: 1px; height: 18px; background: #5f6368; }
.viewer-tools svg { margin-left: 20px; }
.zoom-level { width: 57px; height: 26px; line-height: 25px; background: #191b1c; text-align: center; margin-left: 20px; font-weight: 500; letter-spacing: -.38px; }
.viewer-tools .fit { margin-left: 26px; }
.viewer-tools .rotate { margin-left: 22px; }
.viewer-tools svg + i { margin-left: 20px; }
.viewer-end { margin-left: auto; display: flex; align-items: center; gap: 33px; }
.viewer-end .more { margin-left: 3px; }
.viewer-body { height: 420px; display: flex; }
.thumbs { width: 354px; background: #323639; display: flex; flex-direction: column; align-items: center; padding: 22px 0 0 1px; overflow: hidden; }
.thumb { flex: none; width: 135px; height: 190px; font-family: "Liberation Sans", sans-serif; }
.thumb-current { width: 151px; height: 206px; border: 8px solid #8ab4f8; outline: 1px solid #55719e; outline-offset: -1px; }
.mono { font: 700 6.300px "Liberation Mono", monospace; fill: #808080; }
.mono-dim { fill: #606162; }
.thumb-no { flex: none; height: 53px; color: #fff; font: 500 16px/29px Roboto, sans-serif; }
.side-scroll span { flex: 1; }
.pdf-main { width: 1127px; background: #525659; padding: 4px 0 0 68px; }
.pdf-page { width: 990px; height: 416px; background: #fff; color: #000; padding: 0 40px 0 78px; box-shadow: 0 0 5px rgba(0,0,0,.6); overflow: hidden; }
.pdf-head { height: 221px; padding: 41px 0 0 14px; display: flex; justify-content: space-between; }
.hmlr-name { font: 300 27px/32px Lato, sans-serif; letter-spacing: .15px; -webkit-text-stroke: .6px #000; transform: scaleX(.9); transform-origin: 0 0; white-space: nowrap; height: 32px; }
.pdf-head svg { margin-top: 7px; }
.pdf-grid { display: grid; grid-template: 51px 1fr / 286px 285px 285px; column-gap: 8px; }
.official { grid-row: 1 / 3; height: 200px; background: #ccc; padding: 1px 0 0 7px; font: 300 52px/52.500px Lato, sans-serif; font-variant-ligatures: none; -webkit-text-stroke: 1.300px #000; white-space: nowrap; }
.official div { transform: scaleX(.9); transform-origin: 0 0; }
.official .o1 { letter-spacing: -.7px; }
.tag { background: #ccc; padding-left: 19px; font: 23.400px/53px "Liberation Sans", Arial, sans-serif; clip-path: polygon(0 0, 100% 0, 100% 33px, calc(100% - 9px) 100%, 0 100%); white-space: nowrap; }
.tag-edition { padding-left: 12px; }
.notes { grid-column: 2 / 4; list-style: none; padding: 15px 0 0 47px; font: 20px/20px "Liberation Sans", Arial, sans-serif; white-space: nowrap; }
.notes li { margin-bottom: 6.500px; display: block; }
.notes li::before { content: "–"; float: left; margin: -2px 0 0 -23px; }
.main-scroll span { height: 146px; }

/* Reminder popup */
.reminder-wrap { position: absolute; right: 0; bottom: 0; width: 390px; height: 97px; background: rgba(255,255,255,.5); padding: 8px 9px 9px 6px; }
.reminder { height: 80px; border: 1px solid #777; border-radius: 11px; background: #fafafa; padding: 4px 10px 10px; display: flex; flex-direction: column; }
.reminder strong { font-size: 15px; font-weight: 400; line-height: 22px; color: #86c41f; -webkit-text-stroke: .7px #86c41f; transform: scaleX(.935); transform-origin: 0 0; }
.reminder button { margin: 5px 0 0 auto; flex: none; width: 66px; height: 38px; border: 1px solid #aaa; border-radius: 9px; background: #fff; box-shadow: 0 0 4px rgba(0,0,0,.3); font: 14px "Open Sans", sans-serif; color: #555; padding: 0 0 5px; }
.reminder button span { display: inline-block; transform: scaleX(.957); }

/* Taskbar */
.taskbar { height: 50px; flex: none; background: linear-gradient(90deg, #213840 0, #213840 30%, #1d2f3f 60%, #1a2742 90%); display: flex; color: #fff; }
.start { width: 60px; padding: 15px 20px; }
.search { width: 360px; background: #f2f2f2; border: 1px solid #c4c4c4; display: flex; align-items: center; padding: 0 4px 0 14px; }
.search span { margin: -2px auto 0 14px; font-size: 18.500px; color: #333; transform: scaleX(.964); transform-origin: 0 0; }
.search svg { margin-top: -4px; }
.briefcase { width: 90px; height: 40px; border-radius: 8px; background: #e2e2e2; display: flex; justify-content: center; }
.search .briefcase svg { margin-top: 3px; }
.apps { display: flex; padding-left: 1px; }
.apps span { width: 62px; display: flex; align-items: center; justify-content: center; }
.apps .task-view { padding-right: 4px; }
.app-open { background: linear-gradient(#76b9ed, #76b9ed) center bottom / 51px 3px no-repeat; }
.apps .app-active { width: 61px; margin-right: 1px; background: linear-gradient(#76b9ed, #76b9ed) center bottom / 61px 3px no-repeat, linear-gradient(90deg, #4f5f67 0 56px, #3b4b53 56px 57px, #46555c 57px); }
.tray { margin-left: auto; display: flex; align-items: center; }
.tray path { fill: none; stroke: #fff; stroke-width: 1.4; }
.tray .notify path:first-child { fill: #fff; stroke: none; }
.tray .notify path:last-child { stroke: #1b2a41; }
.cam { margin-left: 15px; }
.net { margin-left: 11px; }
.vol { margin-left: 9px; }
.lang { margin-left: 12px; width: 30px; font-size: 15px; transform: scaleX(.94); transform-origin: 0 0; }
.clock { margin-left: 14px; width: 76px; font-size: 15px; line-height: 23px; display: flex; flex-direction: column; align-items: center; white-space: nowrap; margin-top: -1px; }
.clock span { transform: scaleX(.965); }
.notify { position: relative; margin: -4px 25px 0 23px; }
.notify b { position: absolute; left: 10px; top: 9px; width: 21px; height: 21px; border-radius: 50%; background: #2b2d33; border: 1px solid #888; font: 600 14px/19px "Open Sans", sans-serif; text-align: center; }
.peek { width: 6px; height: 50px; border-left: 1px solid #6b7687; }
```
